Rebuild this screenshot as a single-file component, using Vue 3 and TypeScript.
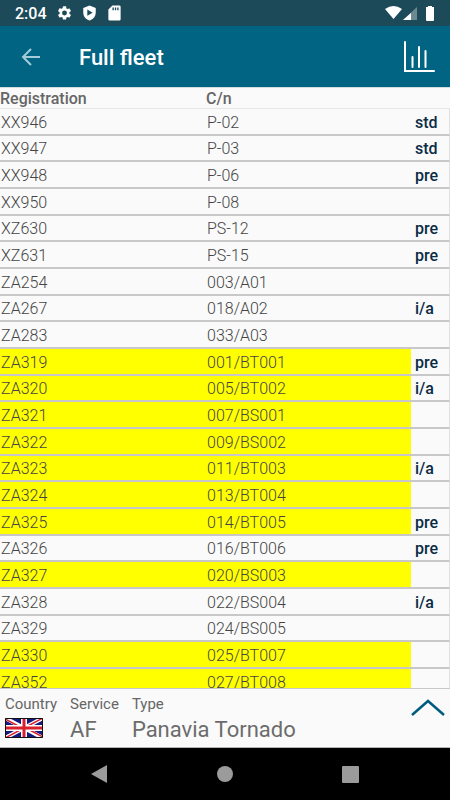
<script setup lang="ts">
interface Aircraft {
  registration: string
  cn: string
  status: string
  highlighted: boolean
}

const make = (registration: string, cn: string, status = '', highlighted = false): Aircraft => ({
  registration,
  cn,
  status,
  highlighted,
})

const fleet: Aircraft[] = [
  make('XX946', 'P-02', 'std'),
  make('XX947', 'P-03', 'std'),
  make('XX948', 'P-06', 'pre'),
  make('XX950', 'P-08'),
  make('XZ630', 'PS-12', 'pre'),
  make('XZ631', 'PS-15', 'pre'),
  make('ZA254', '003/A01'),
  make('ZA267', '018/A02', 'i/a'),
  make('ZA283', '033/A03'),
  make('ZA319', '001/BT001', 'pre', true),
  make('ZA320', '005/BT002', 'i/a', true),
  make('ZA321', '007/BS001', '', true),
  make('ZA322', '009/BS002', '', true),
  make('ZA323', '011/BT003', 'i/a', true),
  make('ZA324', '013/BT004', '', true),
  make('ZA325', '014/BT005', 'pre', true),
  make('ZA326', '016/BT006', 'pre'),
  make('ZA327', '020/BS003', '', true),
  make('ZA328', '022/BS004', 'i/a'),
  make('ZA329', '024/BS005'),
  make('ZA330', '025/BT007', '', true),
  make('ZA352', '027/BT008', '', true),
]
</script>

<template>
  <div class="screen">
    <div class="status-bar">
      <span class="clock">2:04</span>
      <svg class="status-icon" viewBox="1 1 22 22" aria-hidden="true">
        <path d="M19.14 12.94c.04-.3.06-.61.06-.94s-.02-.64-.07-.94l2.03-1.58a.49.49 0 0 0 .12-.61l-1.92-3.32a.49.49 0 0 0-.59-.22l-2.39.96a7 7 0 0 0-1.62-.94l-.36-2.54A.48.48 0 0 0 13.92 2h-3.84a.48.48 0 0 0-.47.41l-.36 2.54a7 7 0 0 0-1.62.94l-2.39-.96a.48.48 0 0 0-.59.22L2.74 8.87a.48.48 0 0 0 .12.61l2.03 1.58a6 6 0 0 0 0 1.88l-2.03 1.58a.49.49 0 0 0-.12.61l1.92 3.32c.12.22.37.29.59.22l2.39-.96c.5.38 1.03.7 1.62.94l.36 2.54c.05.24.24.41.48.41h3.84c.24 0 .44-.17.47-.41l.36-2.54a7 7 0 0 0 1.62-.94l2.39.96c.22.08.47 0 .59-.22l1.92-3.32a.48.48 0 0 0-.12-.61zM12 15.6a3.6 3.6 0 1 1 0-7.2 3.6 3.6 0 0 1 0 7.2z" />
      </svg>
      <svg class="status-icon" viewBox="0 0 24 24" aria-hidden="true">
        <path fill-rule="evenodd" d="M12 0 2 4v7c0 6 4 11 10 13 6-2 10-7 10-13V4zM8.5 6.5v10l8.5-5z" />
      </svg>
      <svg class="status-icon" viewBox="1 1 22 22" aria-hidden="true">
        <path fill-rule="evenodd" d="M9 1 3 7v14a2 2 0 0 0 2 2h14a2 2 0 0 0 2-2V3a2 2 0 0 0-2-2zM9 4h2v4H9zm3.5 0h2v4h-2zm3.5 0h2v4h-2z" />
      </svg>
      <svg class="signals" viewBox="0 0 52 16" aria-hidden="true">
        <path d="M1 4Q9.500-2 18 4L9.500 14z" />
        <path opacity=".35" d="M33 2v13H19z" />
        <path d="M27 8v7h-8z" />
        <path d="M42 2h2V1h4v1h2v13q0 1-1 1h-6q-1 0-1-1z" />
      </svg>
    </div>

    <header class="app-bar">
      <button class="icon-button" type="button" aria-label="Back">
        <svg width="20" height="20" viewBox="0 0 20 20" fill="none" stroke="#a5ccd9" stroke-width="2">
          <path d="M19 10H2M10 2l-8 8 8 8" />
        </svg>
      </button>
      <h1>Full fleet</h1>
      <button class="icon-button" type="button" aria-label="Statistics">
        <svg width="32" height="32" viewBox="0 0 32 32" fill="none" stroke="#fff" stroke-width="2" stroke-linecap="round">
          <path d="M2 1v29h29M9.500 16v10M16 6v20M22.500 10v16" />
        </svg>
      </button>
    </header>

    <main class="fleet">
      <table>
        <colgroup>
          <col class="col-registration" />
          <col />
          <col class="col-status" />
        </colgroup>
        <thead>
          <tr>
            <th scope="col">Registration</th>
            <th scope="col">C/n</th>
            <td></td>
          </tr>
        </thead>
        <tbody>
          <tr v-for="item in fleet" :key="item.registration" :class="{ highlighted: item.highlighted }">
            <td>{{ item.registration }}</td>
            <td>{{ item.cn }}</td>
            <td class="status">{{ item.status }}</td>
          </tr>
        </tbody>
      </table>
    </main>

    <section class="summary">
      <dl>
        <div>
          <dt>Country</dt>
          <dd>
            <svg class="flag" viewBox="0 0 38 20" role="img" aria-label="United Kingdom">
              <path fill="#15187c" d="M0 0h38v20H0z" />
              <path stroke="#fff" stroke-width="4" d="m0 0 38 20M38 0 0 20" />
              <path stroke="#d8202f" stroke-width="1.500" d="m0 1 17 9M38 19l-17-9M38 0 20 9.500M0 20l18-9.500" />
              <path stroke="#fff" stroke-width="6" d="M19 0v20M0 10h38" />
              <path stroke="#d8202f" stroke-width="3" d="M19 0v20M0 10h38" />
              <path fill="none" stroke="#111" d="M.5.5h37v19H.5z" />
            </svg>
          </dd>
        </div>
        <div>
          <dt>Service</dt>
          <dd>AF</dd>
        </div>
        <div>
          <dt>Type</dt>
          <dd>Panavia Tornado</dd>
        </div>
      </dl>
      <button class="icon-button expand" type="button" aria-label="Expand">
        <svg width="36" height="20" viewBox="0 0 36 20" fill="none" stroke="#005b80" stroke-width="2.500">
          <path d="M2 17 18 3l16 14" />
        </svg>
      </button>
    </section>

    <nav class="system-nav" aria-label="System">
      <button class="icon-button" type="button" aria-label="Back">
        <svg width="18" height="20" viewBox="0 0 18 20"><path d="M1 10 17 1v18z" /></svg>
      </button>
      <button class="icon-button" type="button" aria-label="Home">
        <svg width="18" height="20" viewBox="0 0 18 20"><circle cx="9" cy="10" r="8" /></svg>
      </button>
      <button class="icon-button" type="button" aria-label="Recent apps">
        <svg width="18" height="20" viewBox="0 0 18 20"><rect y="2" width="17" height="17" rx="1" /></svg>
      </button>
    </nav>
  </div>
</template>

<style>
body {
  margin: 0;
}
</style>

<style scoped>
.screen {
  display: flex;
  flex-direction: column;
  height: 100vh;
  overflow: hidden;
  background: #fafafa;
  color: #555;
  font-family: Roboto, "Liberation Sans", sans-serif;
}

.icon-button {
  display: flex;
  padding: 0;
  border: 0;
  background: none;
  cursor: pointer;
}

.status-bar {
  display: flex;
  flex: none;
  align-items: center;
  gap: 10px;
  height: 26px;
  padding: 0 14px 0 15px;
  background: #1c4a59;
  color: #fff;
}

.clock {
  padding-top: 2px;
  font-size: 16px;
  font-weight: 500;
  line-height: 24px;
}

.status-icon {
  width: 15px;
  height: 16px;
  fill: #fff;
}

.signals {
  width: 52px;
  height: 16px;
  margin-left: auto;
  fill: #fff;
}

.app-bar {
  display: flex;
  flex: none;
  align-items: center;
  height: 61px;
  padding: 0 15px 0 21px;
  background: #006482;
  color: #fff;
}

h1 {
  flex: 1;
  margin: 0 0 0 38px;
  padding-top: 2px;
  font-size: 22px;
  font-weight: 500;
  line-height: 28px;
}

.fleet {
  flex: 1;
  min-height: 0;
  overflow: hidden;
  border-top: 1px solid #d5dcdf;
}

table {
  width: 100%;
  table-layout: fixed;
  border-spacing: 0;
}

.col-registration {
  width: 206px;
}

.col-status {
  width: 39px;
}

thead th,
thead td {
  height: 18px;
  padding: 2px 0 0;
  border-bottom: 1px solid #e6e6e6;
  color: #666;
  font-size: 16px;
  font-weight: 500;
  line-height: 18px;
  text-align: left;
}

tbody td {
  height: 23px;
  padding: 2px 0 0 1px;
  border-bottom: 2px solid #c8c8c8;
  color: #444;
  font-size: 16px;
  font-weight: 300;
  line-height: 23px;
}

tbody tr:nth-child(3n + 2) td {
  height: 22px;
  line-height: 22px;
}

tbody .status {
  padding-left: 4px;
  border-right: 1px solid #e0e0e0;
  color: #0b2c45;
  font-weight: 500;
}

.highlighted td:not(.status) {
  background: #ff0;
}

.summary {
  display: flex;
  flex: none;
  justify-content: space-between;
  align-items: flex-start;
  height: 58px;
  padding: 0 4px 0 5px;
  border-top: 1px solid #c8c8c8;
  border-bottom: 1px solid #b4b4b4;
  background: #fafafa;
}

dl {
  display: flex;
  gap: 13px;
  margin: 0;
}

dt {
  margin-top: 5px;
  color: #666;
  font-size: 15px;
  line-height: 20px;
}

dd {
  margin: 0;
  color: #6c6c6c;
  font-size: 22px;
  line-height: 32px;
}

.flag {
  display: block;
  width: 38px;
  height: 20px;
  margin-top: 4px;
}

.expand {
  margin-top: 9px;
}

.system-nav {
  display: flex;
  flex: none;
  justify-content: space-between;
  align-items: center;
  height: 52px;
  padding: 0 20%;
  background: #000;
  fill: #9b9b9b;
}
</style>
